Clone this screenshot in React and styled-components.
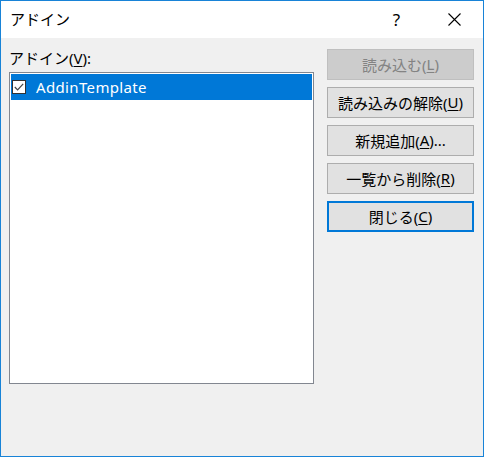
import React from "react";
import styled, { createGlobalStyle } from "styled-components";

const Global = createGlobalStyle`
  html, body { margin: 0; padding: 0; background: #f0f0f0; }
  body { width: 484px; height: 457px; overflow: hidden;
    font-family: "Segoe UI", "Noto Sans", "Noto Sans CJK JP", sans-serif; }
  u { text-decoration: underline; text-underline-offset: 2px; text-decoration-thickness: 1px; }
`;

const Window = styled.div`
  box-sizing: border-box;
  width: 484px;
  height: 457px;
  border: 1px solid #1883d7;
  background: #f0f0f0;
  display: flex;
  flex-direction: column;
  color: #000;
  font-size: 15px;
`;

const TitleBar = styled.div`
  height: 37px;
  background: #fff;
  display: flex;
  align-items: center;
  padding-left: 9px;
`;

const Title = styled.div`
  flex: 1;
  font-size: 15px;
  line-height: 20px;
  padding-bottom: 2px;
`;

const TitleButton = styled.div`
  width: ${(p) => p.$w}px;
  height: 37px;
  display: flex;
  align-items: center;
  justify-content: center;
  font-size: 17px;
`;

const Body = styled.div`
  flex: 1;
  display: flex;
  padding: 11px 9px 0 8px;
  gap: 13px;
`;

const LeftCol = styled.div`
  display: flex;
  flex-direction: column;
  width: 305px;
`;

const Label = styled.div`
  height: 18px;
  line-height: 18px;
  margin-bottom: 5px;
  font-size: 15px;
`;

const ListBox = styled.div`
  box-sizing: border-box;
  height: 312px;
  border: 1px solid #828790;
  background: #fff;
  padding: 1px;
`;

const Row = styled.div`
  height: 26px;
  background: ${(p) => (p.$selected ? "#0078d7" : "transparent")};
  color: ${(p) => (p.$selected ? "#fff" : "#000")};
  display: flex;
  align-items: center;
  padding-left: 1px;
  gap: 10px;
  font-size: 15px;
  letter-spacing: 0.35px;
`;

const Check = styled.div`
  box-sizing: border-box;
  width: 14px;
  height: 14px;
  background: #fff;
  border: 1px solid #333;
  display: flex;
  align-items: center;
  justify-content: center;
`;

const RightCol = styled.div`
  display: flex;
  flex-direction: column;
  gap: 7px;
  width: 147px;
`;

const Button = styled.div`
  box-sizing: border-box;
  height: 31px;
  display: flex;
  align-items: center;
  justify-content: center;
  font-size: 15px;
  background: ${(p) => (p.$disabled ? "#cccccc" : "#e1e1e1")};
  color: ${(p) => (p.$disabled ? "#838383" : "#000")};
  border: ${(p) =>
    p.$focused ? "2px solid #0078d7" : p.$disabled ? "1px solid #bfbfbf" : "1px solid #adadad"};
  padding-bottom: 1px;
`;

export default function App() {
  return (
    <>
      <Global />
      <Window>
        <TitleBar>
          <Title>アドイン</Title>
          <TitleButton $w={57}>?</TitleButton>
          <TitleButton $w={58}>
            <svg width="13" height="13" viewBox="0 0 13 13">
              <path d="M0.5 0.5 L12.5 12.5 M12.5 0.5 L0.5 12.5" stroke="#000" strokeWidth="1.1" />
            </svg>
          </TitleButton>
        </TitleBar>
        <Body>
          <LeftCol>
            <Label>
              アドイン(<u>V</u>):
            </Label>
            <ListBox>
              <Row $selected>
                <Check>
                  <svg width="10" height="8" viewBox="0 0 10 8">
                    <path d="M0.8 4 L3.6 6.8 L9.2 0.8" fill="none" stroke="#444" strokeWidth="1.2" />
                  </svg>
                </Check>
                AddinTemplate
              </Row>
            </ListBox>
          </LeftCol>
          <RightCol>
            <Button $disabled>
              読み込む(<u>L</u>)
            </Button>
            <Button>
              読み込みの解除(<u>U</u>)
            </Button>
            <Button>
              新規追加(<u>A</u>)...
            </Button>
            <Button>
              一覧から削除(<u>R</u>)
            </Button>
            <Button $focused>
              閉じる(<u>C</u>)
            </Button>
          </RightCol>
        </Body>
      </Window>
    </>
  );
}
